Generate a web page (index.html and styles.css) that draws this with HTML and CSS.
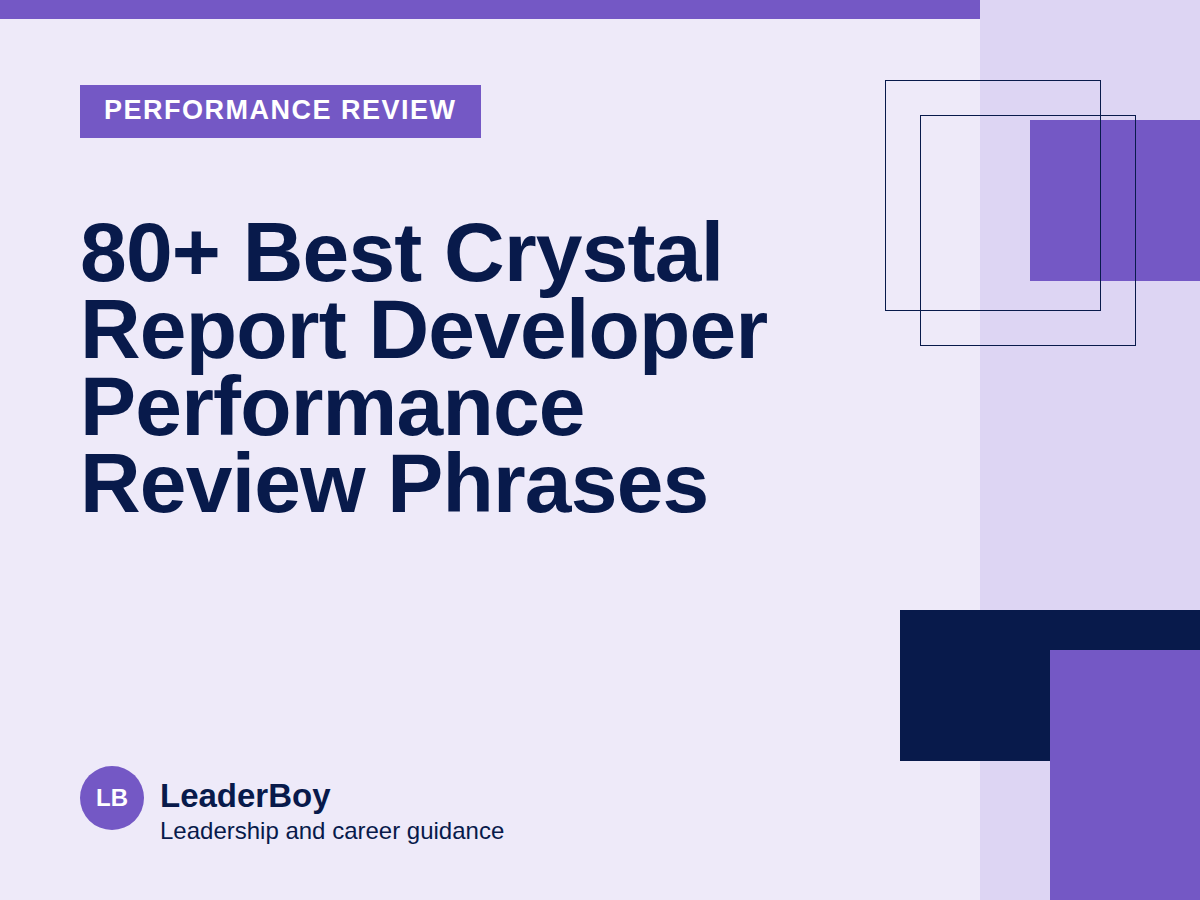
FILE: index.html
```html
<!DOCTYPE html>
<html lang="en">
<head>
<meta charset="utf-8">
<title>80+ Best Crystal Report Developer Performance Review Phrases</title>
<link rel="stylesheet" href="styles.css">
</head>
<body>
<div class="page">
  <main class="content">
    <div class="topbar"></div>
    <div class="inner">
      <div class="head">
        <div class="badge">PERFORMANCE REVIEW</div>
        <h1 class="title">80+ Best Crystal Report Developer Performance Review Phrases</h1>
      </div>
      <div class="brand">
        <div class="logo">LB</div>
        <div class="brand-text">
          <div class="brand-name">LeaderBoy</div>
          <div class="brand-tag">Leadership and career guidance</div>
        </div>
      </div>
    </div>
  </main>
  <aside class="panel"></aside>
  <div class="deco deco-fill-top"></div>
  <div class="deco deco-outline deco-outline-a"></div>
  <div class="deco deco-outline deco-outline-b"></div>
  <div class="deco deco-navy"></div>
  <div class="deco deco-fill-bottom"></div>
</div>
</body>
</html>
```
FILE: styles.css
```css
* { box-sizing: border-box; }
html, body { margin: 0; padding: 0; }
body {
  background: #EEEAF9;
  font-family: "Liberation Sans", Arial, sans-serif;
  color: #081A4B;
}
.page {
  position: relative;
  width: 1200px;
  height: 900px;
  display: flex;
  overflow: hidden;
  background: #EEEAF9;
}
.content {
  width: 980px;
  display: flex;
  flex-direction: column;
}
.topbar {
  height: 19px;
  background: #7458C5;
}
.inner {
  flex: 1;
  display: flex;
  flex-direction: column;
  justify-content: space-between;
  padding: 66px 80px 54px 80px;
}
.head {
  display: flex;
  flex-direction: column;
  align-items: flex-start;
}
.badge {
  background: #7458C5;
  color: #FFFFFF;
  font-weight: 700;
  font-size: 27px;
  line-height: 33px;
  letter-spacing: 1.5px;
  padding: 9px 24px 11px 24px;
}
.title {
  margin: 76px 0 0 0;
  font-size: 84px;
  line-height: 77px;
  font-weight: 700;
  letter-spacing: -0.8px;
  color: #081A4B;
  max-width: 720px;
}
.brand {
  display: flex;
  align-items: flex-start;
  gap: 16px;
}
.logo {
  width: 64px;
  height: 64px;
  border-radius: 50%;
  background: #7458C5;
  color: #FFFFFF;
  font-weight: 700;
  font-size: 24px;
  display: flex;
  align-items: center;
  justify-content: center;
  margin-top: -12px;
}
.brand-text {
  display: flex;
  flex-direction: column;
}
.brand-name {
  font-size: 33px;
  line-height: 36px;
  font-weight: 700;
}
.brand-tag {
  font-size: 24px;
  line-height: 30px;
  margin-top: 2px;
}
.panel {
  width: 220px;
  background: #DDD5F3;
}
.deco { position: absolute; }
.deco-fill-top {
  left: 1030px; top: 120px; width: 170px; height: 161px;
  background: #7458C5;
}
.deco-outline {
  width: 216px; height: 231px;
  border: 1px solid #081A4B;
}
.deco-outline-a { left: 885px; top: 80px; }
.deco-outline-b { left: 920px; top: 115px; }
.deco-navy {
  left: 900px; top: 610px; width: 300px; height: 151px;
  background: #081A4B;
}
.deco-fill-bottom {
  left: 1050px; top: 650px; width: 150px; height: 250px;
  background: #7458C5;
}
```
